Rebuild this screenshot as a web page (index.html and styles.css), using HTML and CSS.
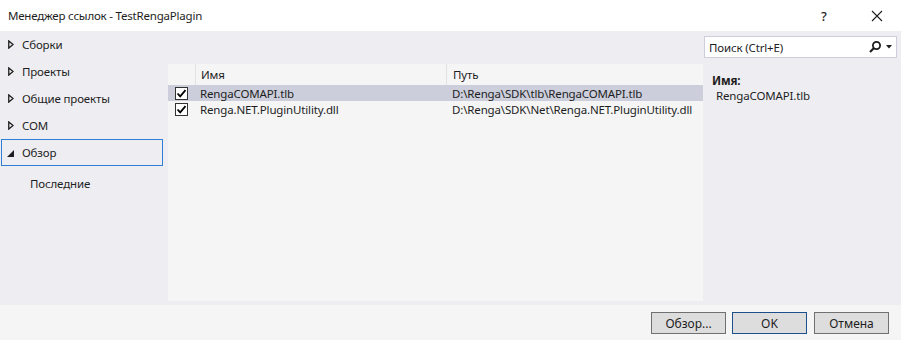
FILE: index.html
```html
<!DOCTYPE html>
<html lang="ru">
<head>
<meta charset="utf-8">
<title>Менеджер ссылок</title>
<link rel="stylesheet" href="styles.css">
</head>
<body>
<div class="window">
  <div class="titlebar">
    <span class="title">Менеджер ссылок - TestRengaPlagin</span>
    <span class="help">?</span>
    <span class="close">
      <svg width="12" height="12" viewBox="0 0 12 12"><path d="M1 1L11 11M11 1L1 11" stroke="#1e1e1e" stroke-width="1.1" fill="none"/></svg>
    </span>
  </div>
  <div class="main">
    <div class="nav">
      <div class="nav-item"><svg class="tri" width="6" height="9" viewBox="0 0 6 9"><path d="M0.75 0.9V8.1L5.1 4.5Z" stroke="#1e1e1e" stroke-width="1.3" fill="none" stroke-linejoin="miter"/></svg>Сборки</div>
      <div class="nav-item"><svg class="tri" width="6" height="9" viewBox="0 0 6 9"><path d="M0.75 0.9V8.1L5.1 4.5Z" stroke="#1e1e1e" stroke-width="1.3" fill="none"/></svg>Проекты</div>
      <div class="nav-item"><svg class="tri" width="6" height="9" viewBox="0 0 6 9"><path d="M0.75 0.9V8.1L5.1 4.5Z" stroke="#1e1e1e" stroke-width="1.3" fill="none"/></svg>Общие проекты</div>
      <div class="nav-item"><svg class="tri" width="6" height="9" viewBox="0 0 6 9"><path d="M0.75 0.9V8.1L5.1 4.5Z" stroke="#1e1e1e" stroke-width="1.3" fill="none"/></svg>COM</div>
      <div class="nav-item selected"><svg class="tri-open" width="7" height="7" viewBox="0 0 7 7"><path d="M7 0V7H0Z" fill="#1e1e1e"/></svg>Обзор</div>
      <div class="nav-sub">Последние</div>
    </div>
    <div class="center">
      <div class="grid">
        <div class="row header">
          <div class="cell c-check"></div>
          <div class="cell c-name hdr">Имя</div>
          <div class="cell c-path hdr">Путь</div>
        </div>
        <div class="row sel">
          <div class="cell c-check"><span class="checkbox"><svg width="11" height="11" viewBox="0 0 11 11"><path d="M1.5 5.5L4.2 8.3L9.5 2.2" stroke="#000" stroke-width="1.8" fill="none"/></svg></span></div>
          <div class="cell c-name">RengaCOMAPI.tlb</div>
          <div class="cell c-path">D:\Renga\SDK\tlb\RengaCOMAPI.tlb</div>
        </div>
        <div class="row">
          <div class="cell c-check"><span class="checkbox"><svg width="11" height="11" viewBox="0 0 11 11"><path d="M1.5 5.5L4.2 8.3L9.5 2.2" stroke="#000" stroke-width="1.8" fill="none"/></svg></span></div>
          <div class="cell c-name">Renga.NET.PluginUtility.dll</div>
          <div class="cell c-path">D:\Renga\SDK\Net\Renga.NET.PluginUtility.dll</div>
        </div>
      </div>
    </div>
    <div class="side">
      <div class="search">
        <span class="search-text">Поиск (Ctrl+E)</span>
        <svg class="search-icon" width="14" height="14" viewBox="0 0 14 14"><circle cx="8.5" cy="5.5" r="3.6" stroke="#1e1e1e" stroke-width="1.8" fill="none"/><path d="M6 8L2 12" stroke="#1e1e1e" stroke-width="2.2"/></svg>
        <svg class="search-drop" width="6" height="4" viewBox="0 0 6 4"><path d="M0 0H6L3 3.5Z" fill="#1e1e1e"/></svg>
      </div>
      <div class="info">
        <div class="info-label">Имя:</div>
        <div class="info-value">RengaCOMAPI.tlb</div>
      </div>
    </div>
  </div>
  <div class="footer">
    <button class="btn">Обзор...</button>
    <button class="btn default">OK</button>
    <button class="btn">Отмена</button>
  </div>
</div>
</body>
</html>
```
FILE: styles.css
```css
* { box-sizing: border-box; }
html, body { margin: 0; padding: 0; }
body {
  font-family: "Noto Sans", "Open Sans", sans-serif;
  font-size: 11.5px;
  letter-spacing: -0.15px;
  color: #1e1e1e;
  background: #ffffff;
}
.window {
  width: 901px;
  height: 340px;
  display: flex;
  flex-direction: column;
  overflow: hidden;
}
.titlebar {
  height: 31px;
  background: #ffffff;
  display: flex;
  align-items: center;
  padding-left: 8px;
}
.title { flex: 1; font-size: 11.5px; letter-spacing: -0.2px; }
.help {
  width: 20px;
  margin-right: 30px;
  font-size: 13px;
  font-weight: 500;
}
.close {
  width: 12px;
  height: 12px;
  margin-right: 18px;
  display: flex;
}
.main {
  height: 274px;
  background: #eeeef2;
  display: grid;
  grid-template-columns: 168px 535px 198px;
}
.nav {
  padding-top: 0;
  padding-left: 1px;
  display: flex;
  flex-direction: column;
  min-width: 0;
}
.nav-item {
  width: 162px;
  height: 27px;
  display: flex;
  align-items: center;
  padding-left: 6px;
  border: 1px solid transparent;
}
.nav-item.selected {
  border-color: #2f7fd6;
}
.tri {
  margin-right: 8px;
  margin-left: 0;
}
.tri-open {
  margin-right: 8px;
  margin-left: -1px;
  margin-top: 1px;
}
.nav-sub {
  height: 34px;
  display: flex;
  align-items: center;
  padding-left: 29px;
}
.center {
  padding-top: 33px;
  padding-bottom: 4px;
  display: flex;
  min-width: 0;
}
.grid {
  flex: 1;
  min-width: 0;
  background: #f5f5f5;
}
.row {
  display: flex;
  height: 16px;
  align-items: center;
}
.row.header { height: 21px; }
.row.sel { background: #cccedb; }
.cell {
  height: 100%;
  display: flex;
  align-items: center;
  white-space: nowrap;
  overflow: hidden;
}
.c-check {
  width: 27px;
  flex: none;
  justify-content: center;
}
.c-name { width: 251px; flex: none; padding-left: 5px; }
.c-path { flex: 1; min-width: 0; padding-left: 6px; }
.hdr { border-left: 1px solid #e2e2e6; }
.checkbox {
  width: 13px;
  height: 13px;
  border: 1px solid #333333;
  background: #ffffff;
  display: flex;
  align-items: center;
  justify-content: center;
  margin-left: -1px;
}
.side {
  padding: 5px 4px 0 1px;
  display: flex;
  flex-direction: column;
  min-width: 0;
}
.search {
  height: 22px;
  background: #ffffff;
  border: 1px solid #cccedb;
  display: flex;
  align-items: center;
  padding-left: 4px;
  padding-right: 4px;
}
.search-text { flex: 1; color: #1e1e1e; }
.search-icon { margin-right: 4px; }
.info {
  padding-left: 8px;
  padding-top: 15px;
}
.info-label { font-weight: bold; line-height: 15px; }
.info-value { padding-left: 4px; line-height: 15px; }
.footer {
  flex: 1;
  background: #f5f5f5;
  display: flex;
  justify-content: flex-end;
  align-items: flex-start;
  padding-top: 7px;
  padding-right: 12px;
  gap: 6px;
}
.btn {
  font-family: inherit;
  font-size: 12px;
  letter-spacing: 0;
  color: #1e1e1e;
  width: 75px;
  height: 22px;
  background: #dddddd;
  border: 1px solid #707070;
  padding: 0;
}
.btn.default {
  border-color: #1d4f8c;
  margin-right: 1px;
}
```
